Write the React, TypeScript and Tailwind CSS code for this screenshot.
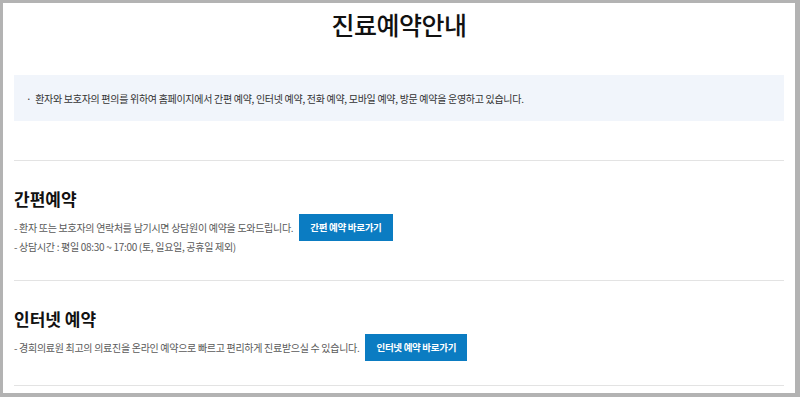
const font = { fontFamily: '"Noto Sans CJK KR", "Noto Sans", sans-serif' };

function Section({
  title,
  lines,
  button,
}: {
  title: string;
  lines: string[];
  button: string;
}) {
  return (
    <div className="border-b border-[#e3e3e3] pt-[26px] pb-[24px]">
      <h3 className="text-[17px] font-bold leading-[24px] text-[#111]">{title}</h3>
      <div className="mt-[7px] flex items-start gap-[6px]">
        <div className="flex flex-col text-[10px] leading-[19px] text-[#5a5a5a] tracking-[-0.3px]">
          {lines.map((l) => (
            <p key={l}>{l}</p>
          ))}
        </div>
        <button className="mt-[-4px] h-[27px] bg-[#0b7cc2] px-[11px] text-[9.5px] font-bold text-white tracking-[-0.3px]">
          {button}
        </button>
      </div>
    </div>
  );
}

export default function App() {
  return (
    <div className="h-[397px] w-[800px] bg-[#b3b3b3] pt-[3px] pl-[3px] pr-[5px] pb-[4px]" style={font}>
      <div className="h-full overflow-hidden bg-white px-[11px]">
        <h1 className="pt-[1px] text-center text-[25px] font-medium leading-[40px] text-[#111] tracking-[-0.5px]">
          진료예약안내
        </h1>
        <div className="mt-[31px] flex h-[46px] items-center bg-[#f1f5fb] px-[12px] text-[10px] text-[#333] tracking-[-0.3px]">
          · &nbsp;환자와 보호자의 편의를 위하여 홈페이지에서 간편 예약, 인터넷 예약, 전화 예약, 모바일 예약, 방문 예약을 운영하고 있습니다.
        </div>
        <div className="mt-[39px] border-b border-[#e3e3e3]" />
        <Section
          title="간편예약"
          lines={[
            "- 환자 또는 보호자의 연락처를 남기시면 상담원이 예약을 도와드립니다.",
            "- 상담시간 : 평일 08:30 ~ 17:00 (토, 일요일, 공휴일 제외)",
          ]}
          button="간편 예약 바로가기"
        />
        <Section
          title="인터넷 예약"
          lines={["- 경희의료원 최고의 의료진을 온라인 예약으로 빠르고 편리하게 진료받으실 수 있습니다."]}
          button="인터넷 예약 바로가기"
        />
      </div>
    </div>
  );
}
